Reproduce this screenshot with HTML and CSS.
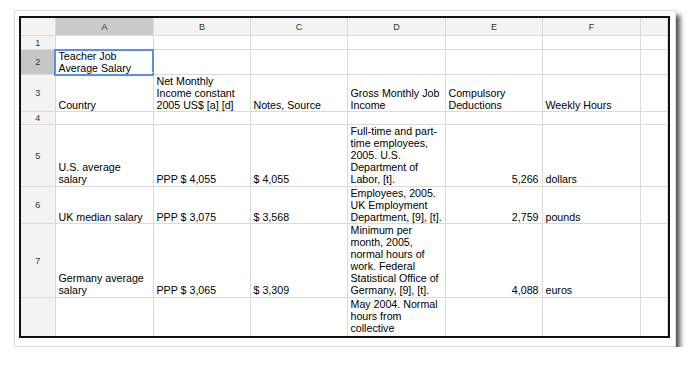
FILE: index.html
```
<!DOCTYPE html>
<html lang="en">
<head>
    <meta charset="UTF-8">
    <title>Teacher Job Average Salary</title>
    <link rel="stylesheet" href="styles.css">
</head>
<body>

    <div class="frame">
        <div class="sheet">
            <table class="grid">
                <colgroup>
                    <col class="c-head">
                    <col class="c-a">
                    <col class="c-b">
                    <col class="c-c">
                    <col class="c-d">
                    <col class="c-e">
                    <col class="c-f">
                    <col>
                </colgroup>
                <thead>
                    <tr class="col-heads">
                        <th class="corner"></th>
                        <th class="active">A</th>
                        <th>B</th>
                        <th>C</th>
                        <th>D</th>
                        <th>E</th>
                        <th>F</th>
                        <th></th>
                    </tr>
                </thead>
                <tbody>
                    <tr class="empty">
                        <th class="rownum">1</th>
                        <td></td><td></td><td></td><td></td><td></td><td></td><td></td>
                    </tr>
                    <tr>
                        <th class="rownum active">2</th>
                        <td class="selected">Teacher Job Average Salary<span class="handle"></span></td>
                        <td></td><td></td><td></td><td></td><td></td><td></td>
                    </tr>
                    <tr>
                        <th class="rownum">3</th>
                        <td>Country</td>
                        <td>Net Monthly Income constant 2005 US$ [a] [d]</td>
                        <td>Notes, Source</td>
                        <td>Gross Monthly Job Income</td>
                        <td>Compulsory Deductions</td>
                        <td>Weekly Hours</td>
                        <td></td>
                    </tr>
                    <tr class="empty short">
                        <th class="rownum">4</th>
                        <td></td><td></td><td></td><td></td><td></td><td></td><td></td>
                    </tr>
                    <tr class="tall">
                        <th class="rownum">5</th>
                        <td>U.S. average salary</td>
                        <td>PPP $ 4,055</td>
                        <td>$ 4,055</td>
                        <td>Full-time and part-time employees, 2005. U.S. Department of Labor, [t].</td>
                        <td class="num">5,266</td>
                        <td>dollars</td>
                        <td></td>
                    </tr>
                    <tr>
                        <th class="rownum">6</th>
                        <td>UK median salary</td>
                        <td>PPP $ 3,075</td>
                        <td>$ 3,568</td>
                        <td>Employees, 2005. UK Employment Department, [9], [t].</td>
                        <td class="num">2,759</td>
                        <td>pounds</td>
                        <td></td>
                    </tr>
                    <tr class="tall">
                        <th class="rownum">7</th>
                        <td>Germany average salary</td>
                        <td>PPP $ 3,065</td>
                        <td>$ 3,309</td>
                        <td>Minimum per month, 2005, normal hours of work. Federal Statistical Office of Germany, [9], [t].</td>
                        <td class="num">4,088</td>
                        <td>euros</td>
                        <td></td>
                    </tr>
                    <tr>
                        <th class="rownum">8</th>
                        <td></td>
                        <td></td>
                        <td></td>
                        <td>May 2004. Normal hours from collective agreements. Statistics Netherlands, [9], [t].</td>
                        <td></td>
                        <td></td>
                        <td></td>
                    </tr>
                </tbody>
            </table>
        </div>
    </div>

</body>
</html>
```
FILE: styles.css
```
body {
    margin: 0;
    padding: 10px 0 0 14px;
    background: #fff;
    font-family: "Liberation Sans", Arial, sans-serif;
    color: #000;
}

.frame {
    width: 651px;
    padding: 5px 5px 8px 4px;
    background: #fff;
    border: 1px solid #dcdcdc;
    box-shadow: 4px 5px 5px rgba(0, 0, 0, 0.7);
}

.sheet {
    height: 318px;
    border: 2px solid #111;
    overflow: hidden;
}

.grid {
    border-collapse: collapse;
    table-layout: fixed;
    width: 647px;
    font-size: 10.67px;
    line-height: 12px;
}

.c-head { width: 34px; }
.c-a { width: 98px; }
.c-b { width: 97px; }
.c-c { width: 97px; }
.c-d { width: 98px; }
.c-e { width: 97px; }
.c-f { width: 98px; }

th, td {
    border: 1px solid #dadada;
    padding: 0 2px 0 3px;
    overflow: hidden;
}

td {
    vertical-align: bottom;
    text-align: left;
}

.tall td {
    padding-bottom: 1px;
}

.col-heads th {
    height: 17px;
    background: #f3f3f3;
    font-size: 9px;
    font-weight: normal;
    color: #333;
    text-align: center;
    vertical-align: middle;
    border-top: none;
}

.col-heads th.active {
    background: #cacaca;
}

.corner {
    border-left: none;
    background-image:
        repeating-linear-gradient(45deg, #c4c4c4 0 1px, #ececec 1px 3px);
    position: relative;
}

.corner::before {
    content: "";
    position: absolute;
    left: 0;
    top: 0;
    right: 4px;
    bottom: 4px;
    background: #f3f3f3;
}

.rownum {
    background: #f3f3f3;
    border-left: none;
    font-size: 9px;
    font-weight: normal;
    color: #333;
    text-align: center;
    vertical-align: middle;
    padding: 0;
}

.rownum.active {
    background: #c6c6c6;
}

.empty td {
    height: 13px;
}

.short td {
    height: 12px;
}

.num {
    text-align: right;
    padding-right: 3px;
}

.selected {
    position: relative;
    outline: 2px solid #5b8de8;
    outline-offset: -1px;
}

.handle {
    position: absolute;
    right: -3px;
    bottom: -3px;
    width: 5px;
    height: 5px;
    background: #5b8de8;
    border: 1px solid #fff;
    box-sizing: border-box;
    z-index: 2;
}
```
